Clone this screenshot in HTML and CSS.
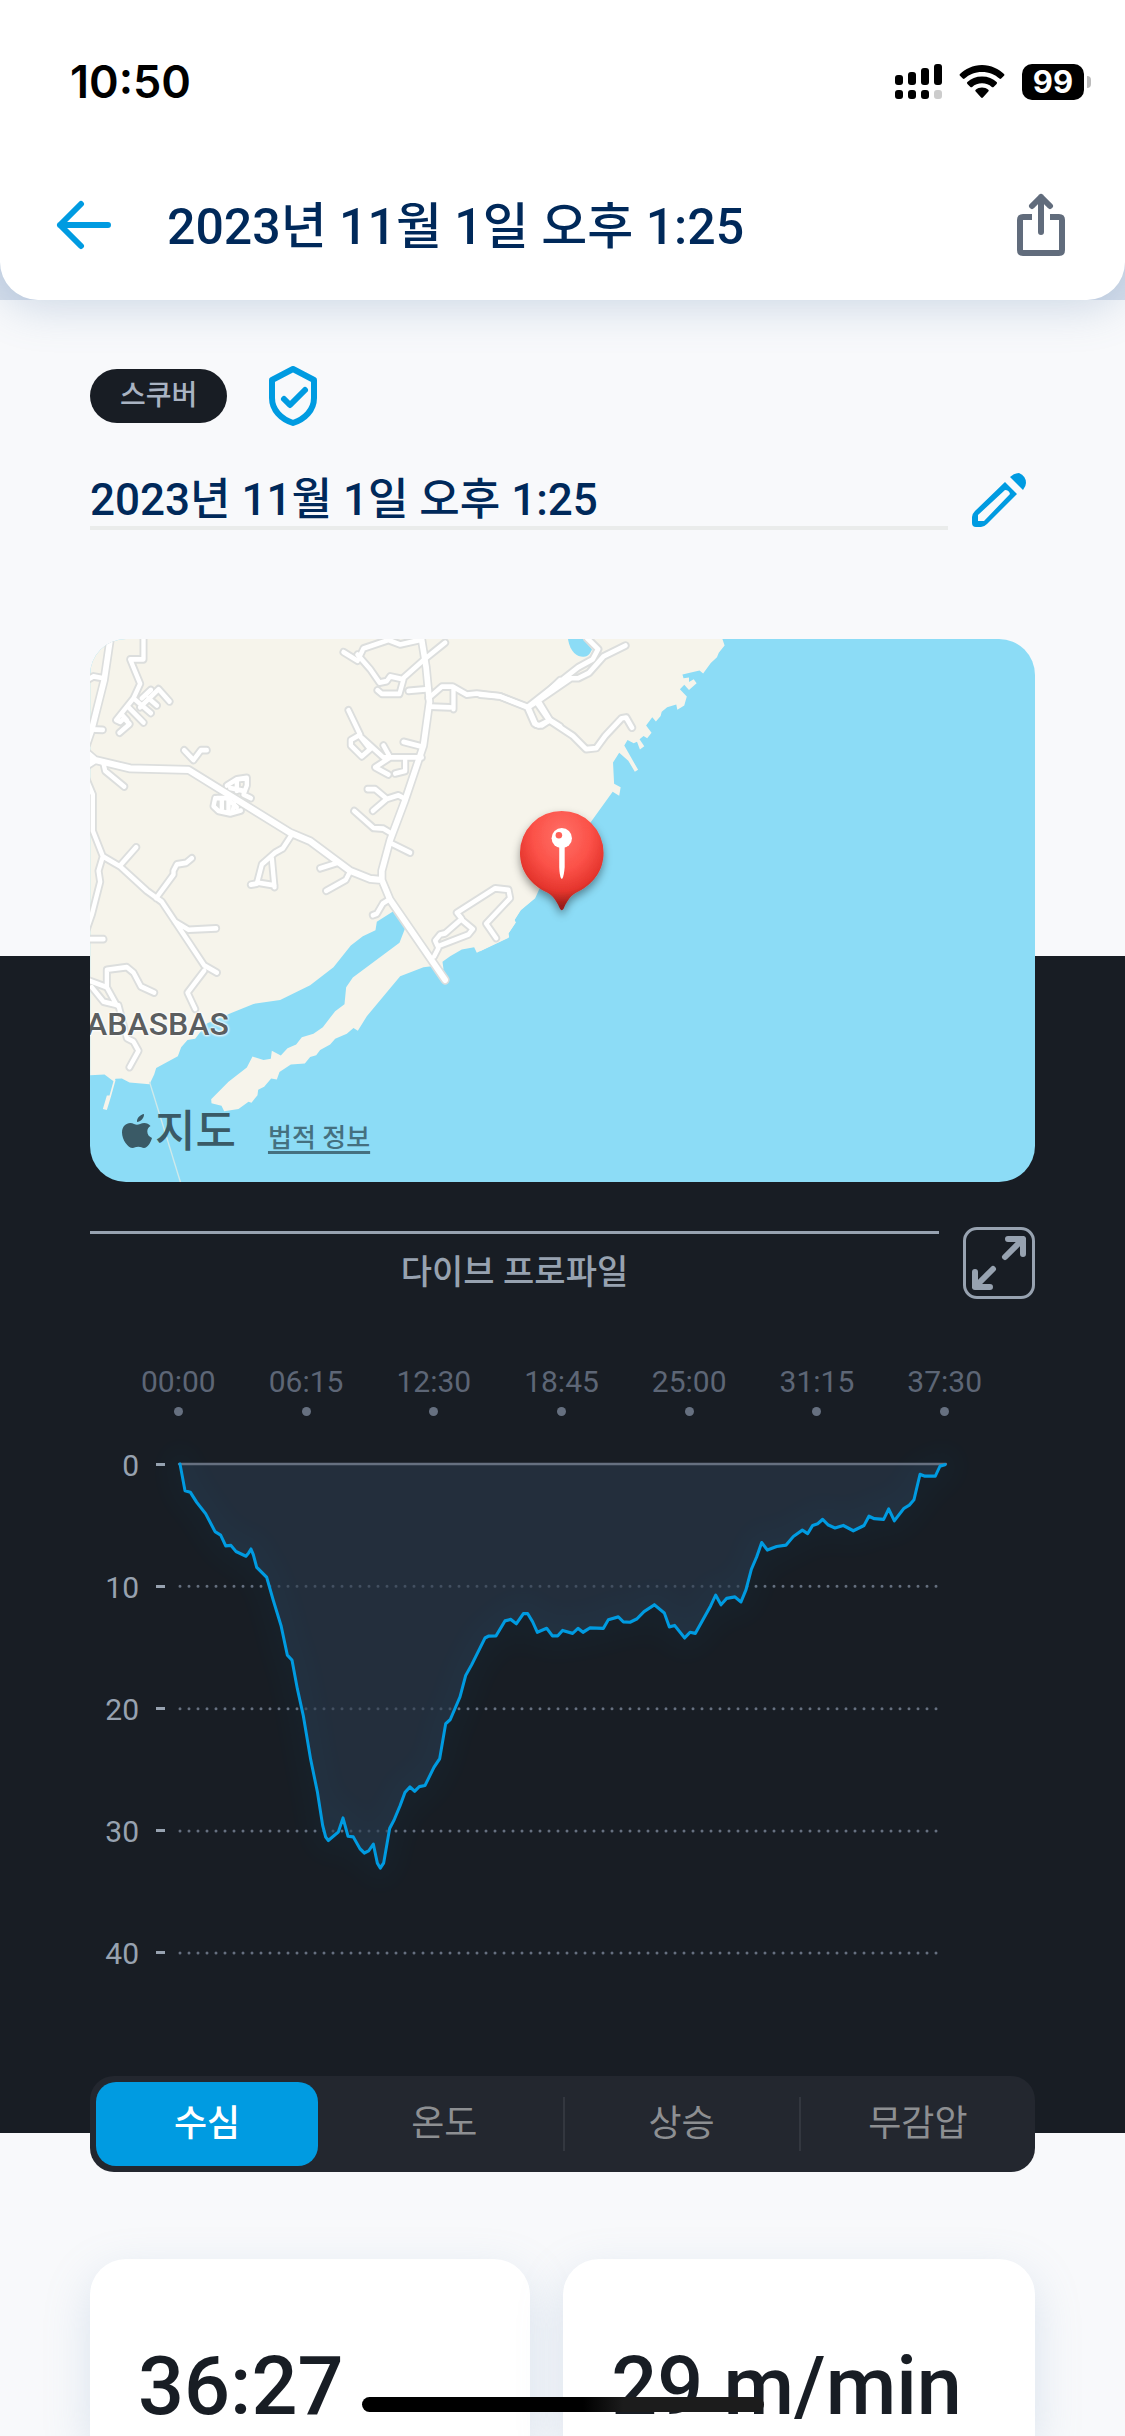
FILE: index.html
```html
<!DOCTYPE html>
<html lang="ko">
<head>
    <meta charset="UTF-8">
    <meta name="viewport" content="width=device-width, initial-scale=1">
    <title>2023년 11월 1일 오후 1:25</title>
    <link rel="stylesheet" href="styles.css">
</head>
<body>
    <div class="screen">
        <header class="header">
            <div class="status-bar">
                <span class="clock">10:50</span>
                <div class="status-icons">
                    <svg width="47" height="36" viewBox="0 0 47 36">
                        <rect x="0" y="11" width="8" height="10" rx="3"/>
                        <rect x="13" y="8" width="8" height="13" rx="3"/>
                        <rect x="26" y="4" width="8" height="17" rx="3"/>
                        <rect x="39" y="0" width="8" height="21" rx="3"/>
                        <rect x="0" y="26" width="8" height="9" rx="3"/>
                        <rect x="13" y="26" width="8" height="9" rx="3"/>
                        <rect x="26" y="26" width="8" height="9" rx="3"/>
                        <rect x="39" y="26" width="8" height="9" rx="3" fill="#ccc"/>
                    </svg>
                    <svg width="46" height="36" viewBox="0 0 46 36">
                        <path d="M23 1C14 1 6 5 1 10c-.6.6-.6 1.200 0 1.800l2.800 2.800c.6.5 1.200.5 1.800 0C10 10.500 16 8 23 8s13 2.500 17.400 6.600c.6.5 1.200.5 1.800 0L45 11.800c.6-.6.6-1.200 0-1.800C40 5 32 1 23 1z"/>
                        <path d="M23 12.500c-6 0-11 2-14.600 5.600-.6.6-.6 1.200 0 1.800l3 3c.6.6 1.200.5 1.800 0 2.600-2.200 6-3.600 9.800-3.600s7.200 1.400 9.800 3.600c.6.500 1.200.6 1.800 0l3-3c.6-.6.6-1.200 0-1.800C34 14.500 29 12.500 23 12.500z"/>
                        <path d="M23 23.500c-2.400 0-4.600.8-6.300 2.200-.6.6-.6 1.200 0 1.800l5.400 6c.6.600 1.200.6 1.800 0l5.400-6c.6-.6.6-1.200 0-1.800-1.700-1.400-3.900-2.200-6.300-2.200z"/>
                    </svg>
                    <div class="battery">99</div>
                </div>
            </div>
            <div class="title-bar">
                <button class="icon-btn" aria-label="뒤로">
                    <svg width="56" height="50" viewBox="0 0 56 50" fill="none" stroke="#009be1" stroke-width="6" stroke-linecap="round" stroke-linejoin="round">
                        <path d="M25 4L4 25l21 21M4 25h48"/>
                    </svg>
                </button>
                <h1>2023년 11월 1일 오후 1:25</h1>
                <button class="icon-btn" aria-label="공유">
                    <svg width="48" height="64" viewBox="0 0 48 64" fill="none" stroke="#616c7c" stroke-width="6">
                        <path d="M15 24H6q-3 0-3 3v30q0 3 3 3h36q3 0 3-3V27q0-3-3-3h-9"/>
                        <path d="M24 39V4M15 13l9-9 9 9" stroke-linecap="round" stroke-linejoin="round"/>
                    </svg>
                </button>
            </div>
        </header>

        <section class="intro">
            <div class="tags">
                <span class="tag">스쿠버</span>
                <svg width="48" height="60" viewBox="0 0 48 60" fill="none" stroke="#009be1" stroke-width="6" stroke-linejoin="round">
                    <path d="M24 3L45 14v18c0 12-9 21-21 25C12 53 3 44 3 32V14z"/>
                    <path d="M15 33l6 6 15-15" stroke-linecap="round"/>
                </svg>
            </div>
            <div class="name-row">
                <input class="name" type="text" value="2023년 11월 1일 오후 1:25" aria-label="다이브 이름">
                <button class="icon-btn" aria-label="편집">
                    <svg width="54" height="54" viewBox="0 0 54 54" fill="#009be1">
                        <path fill-rule="evenodd" d="M33 9l12 12-30 30q-3 3-6 3H4q-4 0-4-4v-6q0-3 3-6zM6 42v6h6l26-27q-1-4-5-4z"/>
                        <path d="M38 4q4-4 9-4 7 3 7 10 0 3-3 7z"/>
                    </svg>
                </button>
            </div>
        </section>

        <section class="profile">
            <div class="map">
                <svg class="map-art" viewBox="0 0 2600 1494" preserveAspectRatio="xMidYMid slice">
                    <defs>
                        <radialGradient id="pin-red" cx=".5" cy=".25" r=".7">
                            <stop offset="0" stop-color="#ff7067"/>
                            <stop offset=".5" stop-color="#fb5148"/>
                            <stop offset=".8" stop-color="#e5352d"/>
                            <stop offset="1" stop-color="#9c1f1a"/>
                        </radialGradient>
                        <filter id="pin-shadow" x="-30%" y="-30%" width="160%" height="160%">
                            <feDropShadow dx="0" dy="12" stdDeviation="12" flood-opacity=".4"/>
                        </filter>
                        <g id="west-roads">
                            <path d="M190 40V108H150L180 175 160 215 108 275 120 280 132 270 148 286 118 310M160 215L212 256M180 240L235 190 268 224M205 215L230 235M185 215L212 192M145 240L190 282M125 260L140 275"/>
                            <path d="M20 165L40 155 70 160M20 300L68 302M70 395L75 415 132 458M312 358L340 385 362 358 380 358"/>
                            <path d="M20 440L38 480V580L68 650 120 678 200 745 245 775 285 830 325 885 372 950 410 970M372 965L322 1025 345 1070M68 650L55 690 60 720 35 810 20 850M120 675L168 625M228 765L280 700V690L290 672 318 668 335 655M285 830L325 852 408 848M20 878L70 878"/>
                            <path d="M20 990L80 1010V962L140 955 160 970 182 1008 222 1025M35 1010L70 1050 115 1060 140 1150 160 1160 175 1185 148 1230M80 1010L110 1060"/>
                            <path d="M440 455L470 438 500 434V455L490 480 512 490M470 440V470M450 462L490 470M405 490L400 512 415 525 450 532 482 524M410 490L440 490 470 515M425 495V520M445 495V528M462 505L458 525"/>
                            <path d="M635 590L608 628 585 640 545 672 530 725 512 728M530 722L583 730M575 655L583 735M720 683L775 667M738 745L797 715 808 695"/>
                            <path d="M790 88L832 112 850 78 925 55 960 67 1018 55M832 95L870 135 898 172 920 168 930 155 970 163 958 203H905L892 193M965 163L1030 110 1095 62M985 195L1045 190"/>
                            <path d="M1045 215L1085 183H1118L1160 205 1190 202 1260 210 1345 240 1375 222 1440 165M1120 190V245M1050 238L1110 240M1345 240L1368 288 1385 290 1410 275 1375 222M1410 275L1440 292"/>
                            <path d="M805 248L840 315 812 330V345L845 375 870 355 840 320 910 378H1025M910 345L930 378 885 405 925 425M970 335L1025 348M975 380V415L945 422"/>
                            <path d="M862 465H885L920 492 878 525M920 492L955 482 975 492M822 525L880 572 910 574 935 588M935 615L990 640M928 768L908 780 890 808 878 812"/>
                            <path d="M1062 925L1075 902 1065 882 1080 865 1095 862 1145 822 1130 805 1245 738 1285 742 1290 765 1218 835 1248 875M1145 825L1178 850 1165 865 1080 895"/>
                        </g>
                        <g id="west-main">
                            <path d="M92 40L72 165 35 300 20 340M20 365L45 385 150 408 325 412 630 585 690 608 810 690 870 712 905 715M1022 40L1038 130 1048 225 1030 345 975 495 930 605 905 690V715L930 770 1095 990M20 400L45 385"/>
                        </g>
                        <g id="east-roads">
                            <path d="M0 205L55 210 130 240 270 130 310 108 325 80 295 50M160 222L250 160 270 160 300 145 340 100 400 70M155 225L190 275 255 318 292 355 320 352 345 318 390 270 402 268 418 296M130 240L150 285 162 290 192 275"/>
                        </g>
                    </defs>

                    <g transform="translate(1073 -52)">
                        <path class="land" d="M0 52H667L673 70 657 90 652 102 635 118 614 147 604 139 557 150 560 160 575 158V170L588 163 596 174 575 192 562 178 550 190 569 210 562 235 543 247 540 232 515 240 500 252 497 264 484 279 474 267 457 290 472 310 460 325 450 319 439 328 452 347 440 356 432 335 423 339 406 330 397 345 435 412 426 417 408 387 383 365 366 392 369 450 387 460 383 483 365 472 307 553 260 620 160 740 150 765 112 797 95 825 98 832 78 862 79 874 0 911z"/>
                        <path class="lake" d="M242 52C248 90 270 102 285 101S305 88 308 80L285 52z"/>
                    </g>
                    <g transform="translate(-27 -52) scale(.917 1)">
                        <path class="land" d="M30 52H1440V700L1380 735 1365 765 1322 798 1303 825 1307 832 1285 862 1287 872 1190 915 1182 900 1145 906 1110 925 1087 940 1090 960 1060 952 1030 955 960 980 860 1090 833 1130 820 1122 800 1138 765 1152 750 1168 720 1183 708 1197 690 1202 674 1220 632 1223 598 1243 590 1264 573 1261 552 1284 534 1292 532 1307 514 1328 505 1325 475 1345 432 1351 424 1336 394 1329 393 1318 445 1270 500 1231 517 1201 550 1210 572 1207 575 1185 602 1198 622 1178 648 1168 665 1148 700 1138 728 1120 765 1076 793 1057 798 1010 818 983 958 888 976 845 942 800 890 830 886 853 848 870 812 895 760 955 690 1005 600 1045 520 1056 455 1080 380 1110 345 1152 322 1155 303 1175 293 1200 228 1232 222 1250 208 1277 148 1272 125 1261 106 1262 102 1270 73 1250 30 1252z"/>
                        <path class="land" d="M102 1262L106 1266 92 1312 80 1348 68 1345 80 1308 88 1308z"/>
                        <path class="ferry" d="M208 1270L302 1550"/>
                    </g>

                    <g class="casing">
                        <use href="#west-roads" transform="translate(-27 -52) scale(.917 1)"/>
                        <use href="#east-roads" transform="translate(1073 -52)"/>
                        <use class="wide" href="#west-main" transform="translate(-27 -52) scale(.917 1)"/>
                    </g>
                    <g class="road">
                        <use href="#west-roads" transform="translate(-27 -52) scale(.917 1)"/>
                        <use href="#east-roads" transform="translate(1073 -52)"/>
                        <use class="wide" href="#west-main" transform="translate(-27 -52) scale(.917 1)"/>
                    </g>

                    <g transform="translate(1073 -52)">
                        <path fill="url(#pin-red)" filter="url(#pin-shadow)" d="M225 525a115 115 0 0 1 115 115c0 52-32 90-76 110-18 10-28 30-34 44q-5 8-10 0c-6-14-16-34-34-44-44-20-76-58-76-110a115 115 0 0 1 115-115z"/>
                        <circle cx="225" cy="600" r="28" fill="#fff"/>
                        <path fill="#fff" d="M218 620h15v60q-2 24-6 30-2 3-4 0-4-6-5-30z"/>
                        <circle cx="217" cy="592" r="9" fill="#ff6058"/>
                    </g>
                </svg>
                <span class="place">ABASBAS</span>
                <div class="credits">
                    <span class="maps">
                        <svg width="31" height="36" viewBox="0 0 31 36" fill="#3a5a66">
                            <path d="M22 0c.3 4-3.500 8-7 8C14.500 4 18.500.6 22 0zM28.500 12c-2 1.300-3.200 3-3.200 5.600 0 3 1.800 5.200 4.700 6.400-1.300 4.500-4.500 10-8 10-2 0-3-1.200-5.700-1.200S12.500 34 10.700 34C6 34 0 26 0 18.500 0 12.500 4 9 8.300 9c2.700 0 5 1.800 6.700 1.800S19.200 9 22.300 9c2.400 0 4.700 1 6.200 3z"/>
                        </svg>지도</span>
                    <a href="#">법적 정보</a>
                </div>
            </div>

            <div class="profile-head">
                <h2>다이브 프로파일</h2>
                <button class="expand" aria-label="확대">
                    <svg width="54" height="54" viewBox="0 0 54 54" fill="none" stroke="#97a2b0" stroke-width="6" stroke-linecap="round" stroke-linejoin="round">
                        <path d="M33 21L51 3M36 3h15v15M21 33L3 51M3 36v15h15"/>
                    </svg>
                </button>
            </div>

            <div class="times">
                <span>00:00</span>
                <span>06:15</span>
                <span>12:30</span>
                <span>18:45</span>
                <span>25:00</span>
                <span>31:15</span>
                <span>37:30</span>
            </div>
            <div class="chart">
                <div class="depths">
                    <span>0</span>
                    <span>10</span>
                    <span>20</span>
                    <span>30</span>
                    <span>40</span>
                </div>
                <svg class="plot" viewBox="0 115 2568 1478" preserveAspectRatio="none">
                    <defs>
                        <filter id="glow" x="-20%" y="-20%" width="140%" height="140%">
                            <feGaussianBlur stdDeviation="36"/>
                        </filter>
                        <path id="depth-line" d="M3 171L18 246 34 250 53 278 80 310 108 360 125 370 140 400 156 399 171 416 201 429 209 420 216 409 223 425 233 460 263 488 283 553 306 623 325 706 339 720 355 800 373 876 395 998 415 1088 431 1183 440 1215 448 1225 478 1201 492 1162 507 1213 523 1215 543 1248 556 1260 569 1254 583 1235 595 1288 604 1302 614 1288 632 1191 646 1166 663 1128 678 1090 693 1075 707 1087 721 1074 738 1071 765 1020 782 996 800 898 814 886 843 823 860 763 878 733 918 658 928 653 951 652 978 610 995 606 1012 618 1033 590 1046 590 1061 613 1075 642 1103 631 1120 652 1136 652 1151 637 1181 645 1197 631 1212 642 1233 630 1273 631 1288 607 1318 599 1333 613 1353 614 1373 605 1395 584 1426 565 1456 588 1471 627 1487 623 1517 658 1533 642 1549 645 1595 568 1610 538 1626 565 1643 547 1668 543 1686 557 1701 523 1717 466 1733 431 1748 391 1765 412 1793 402 1821 398 1843 374 1870 356 1886 366 1901 343 1916 338 1931 326 1948 342 1968 350 1993 343 2023 358 2055 343 2070 317 2086 324 2114 326 2129 297 2146 330 2175 295 2191 286 2205 271 2223 200 2238 205 2269 205 2283 177 2298 173"/>
                    </defs>
                    <path class="grid" d="M3 513H2273M3 856H2273M3 1198H2273M3 1540H2273"/>
                    <use class="area" href="#depth-line"/>
                    <use class="glow" href="#depth-line" filter="url(#glow)"/>
                    <path class="surface" d="M0 171H2301"/>
                    <use class="line" href="#depth-line"/>
                </svg>
            </div>

            <div class="tabs">
                <button class="tab active">수심</button>
                <button class="tab">온도</button>
                <button class="tab">상승</button>
                <button class="tab">무감압</button>
            </div>
        </section>

        <section class="cards">
            <div class="card">36:27</div>
            <div class="card">29 m/min</div>
        </section>

        <div class="home-bar"></div>
    </div>
</body>
</html>
```
FILE: styles.css
```css
* {
    box-sizing: border-box;
}

body {
    margin: 0;
    background-color: #f8f9fb;
    font-family: Roboto, "Noto Sans CJK KR", sans-serif;
}

h1, h2 {
    margin: 0;
    font-weight: 500;
}

svg {
    display: block;
}

button {
    padding: 0;
    border: none;
    background: none;
    font-family: inherit;
    cursor: pointer;
}

.screen {
    position: relative;
    display: flex;
    flex-direction: column;
    height: 100vh;
    overflow: hidden;
    background: linear-gradient(#d5deeb 300px, #f8f9fb 300px);
}

/* header */
.header {
    position: relative;
    padding: 46px 33px 30px 56px;
    background-color: #fff;
    border-radius: 0 0 38px 38px;
    box-shadow: 0 6px 45px rgba(100, 135, 180, 0.3);
}

.status-bar {
    display: flex;
    align-items: center;
    justify-content: space-between;
    height: 72px;
    padding-left: 14px;
}

.clock {
    font-family: Inter, sans-serif;
    font-size: 45px;
    font-weight: 600;
    line-height: 72px;
}

.status-icons {
    display: flex;
    align-items: center;
    gap: 17px;
}

.battery {
    position: relative;
    width: 62px;
    height: 36px;
    margin-right: 8px;
    border-radius: 10px;
    background-color: #000;
    color: #fff;
    font-family: Inter, sans-serif;
    font-size: 31px;
    font-weight: 700;
    line-height: 36px;
    text-align: center;
}

.battery::after {
    content: "";
    position: absolute;
    top: 12px;
    right: -7px;
    width: 4px;
    height: 12px;
    border-radius: 0 6px 6px 0;
    background-color: #bbb;
}

.title-bar {
    display: flex;
    align-items: center;
    height: 90px;
    margin-top: 62px;
    padding-right: 27px;
}

.title-bar h1 {
    flex: 1;
    margin-left: 55px;
    padding-top: 4px;
    color: #00295a;
    font-size: 50px;
    line-height: 86px;
}

/* name */
.intro {
    padding: 66px 90px 426px;
}

.tags {
    display: flex;
    align-items: center;
    gap: 42px;
}

.tag {
    padding: 0 30px;
    border-radius: 27px;
    background-color: #181d24;
    color: #a9b3c2;
    font-size: 28px;
    font-weight: 500;
    line-height: 54px;
}

.name-row {
    display: flex;
    align-items: center;
    gap: 24px;
    margin-top: 44px;
    padding-right: 9px;
}

.name {
    flex: 1;
    min-width: 0;
    height: 60px;
    padding: 0 0 4px;
    border: none;
    border-bottom: 4px solid #eaeceb;
    background: none;
    color: #00295a;
    font-family: inherit;
    font-size: 44px;
    font-weight: 500;
    outline: none;
}

/* dive profile */
.profile {
    padding: 0 90px;
    background-color: #181d24;
}

.map {
    position: relative;
    height: 543px;
    margin-top: -317px;
    border-radius: 36px;
    background-color: #8cdcf6;
    overflow: hidden;
}

.map-art {
    width: 100%;
    height: 100%;
}

.land {
    fill: #f6f4eb;
}

.lake {
    fill: #8cdcf6;
}

.ferry {
    fill: none;
    stroke: #cfe9ea;
    stroke-width: 4;
}

.casing, .road {
    fill: none;
    stroke-linecap: round;
    stroke-linejoin: round;
}

.casing {
    stroke: #dcdedd;
    stroke-width: 24;
}

.casing .wide {
    stroke-width: 27;
}

.road {
    stroke: #fff;
    stroke-width: 13;
}

.road .wide {
    stroke-width: 17;
}

.place {
    position: absolute;
    left: -4px;
    bottom: 138px;
    color: #5b5e60;
    font-size: 32px;
    font-weight: 500;
    line-height: 40px;
    text-shadow: 0 0 3px #fff, 0 0 3px #fff, 0 0 3px #fff;
}

.credits {
    position: absolute;
    left: 32px;
    bottom: 20px;
    display: flex;
    align-items: center;
    gap: 32px;
}

.maps {
    display: flex;
    align-items: center;
    gap: 2px;
    color: #3a5a66;
    font-size: 44px;
    font-weight: 500;
    line-height: 60px;
}

.credits a {
    padding-top: 6px;
    color: #45707f;
    font-size: 26px;
    font-weight: 500;
    text-underline-offset: 4px;
    text-decoration-thickness: 3px;
}

.profile-head {
    display: flex;
    gap: 24px;
    margin-top: 45px;
}

.profile-head h2 {
    flex: 1;
    margin-top: 4px;
    padding-top: 14px;
    border-top: 3px solid #97a2b0;
    color: #97a2b0;
    font-size: 34px;
    line-height: 48px;
    text-align: center;
}

.expand {
    display: flex;
    align-items: center;
    justify-content: center;
    width: 72px;
    height: 72px;
    border: 3px solid #97a2b0;
    border-radius: 14px;
}

.times {
    display: grid;
    grid-template-columns: repeat(7, 1fr);
    justify-items: start;
    margin-top: 65px;
    padding-left: 51px;
    color: #5d6676;
    font-size: 30px;
    line-height: 36px;
}

.times span {
    display: flex;
    flex-direction: column;
    align-items: center;
    gap: 7px;
}

.times span::after {
    content: "";
    width: 9px;
    height: 9px;
    border-radius: 50%;
    background-color: #667080;
}

.chart {
    display: flex;
    gap: 14px;
    height: 528px;
    margin-top: 28px;
}

.depths {
    display: flex;
    flex-direction: column;
    justify-content: space-between;
    width: 75px;
    margin: -4px 0;
    color: #97a2b0;
    font-size: 30px;
    line-height: 48px;
}

.depths span {
    display: flex;
    justify-content: flex-end;
    gap: 17px;
    padding-top: 3px;
    line-height: 45px;
}

.depths span::after {
    content: "";
    width: 9px;
    height: 3px;
    margin-top: 20px;
    background-color: #97a2b0;
}

.plot {
    flex: 1;
    min-width: 0;
    height: 528px;
    overflow: visible;
    fill: none;
    stroke-linejoin: round;
    stroke-linecap: round;
}

.grid {
    stroke: #667080;
    stroke-width: 3px;
    stroke-dasharray: 0 9;
    vector-effect: non-scaling-stroke;
}

.area {
    fill: #2c3a4c;
    fill-opacity: 0.6;
}

.glow {
    stroke: #009be1;
    stroke-width: 80px;
    opacity: 0.03;
}

.surface {
    stroke: #667080;
    stroke-width: 7px;
}

.line {
    stroke: #009be1;
    stroke-width: 9px;
}

.tabs {
    display: grid;
    grid-template-columns: repeat(4, 1fr);
    align-items: center;
    height: 96px;
    margin-top: 104px;
    margin-bottom: -39px;
    border-radius: 24px;
    background-color: #23272f;
}

.tab {
    height: 54px;
    color: #8d8f92;
    font-size: 36px;
    line-height: 48px;
}

.tab + .tab + .tab {
    border-left: 2px solid #33373f;
}

.tab.active {
    height: 84px;
    margin: 0 8px 0 6px;
    border-radius: 20px;
    background-color: #009be1;
    color: #fff;
    font-weight: 500;
}

/* stats */
.cards {
    display: grid;
    grid-template-columns: 14fr 15fr;
    flex: 1;
    gap: 33px;
    margin-top: 126px;
    padding: 0 90px;
}

.card {
    padding: 80px 48px 0;
    border-radius: 36px 36px 0 0;
    background-color: #fff;
    box-shadow: 0 15px 45px rgba(130, 165, 200, 0.25);
    color: #181d24;
    font-size: 81px;
    font-weight: 500;
    line-height: 96px;
    white-space: nowrap;
}

.home-bar {
    position: absolute;
    bottom: 24px;
    left: 50%;
    width: 402px;
    height: 15px;
    border-radius: 8px;
    background: linear-gradient(90deg, #000 55%, #1c1c1c 65%);
    transform: translateX(-50%);
}
```
